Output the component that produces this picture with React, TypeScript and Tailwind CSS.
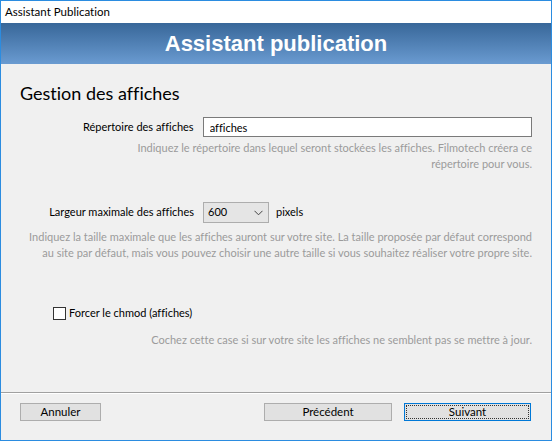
import React from "react";

const font = { fontFamily: 'Lato, "Noto Sans", sans-serif' };

const Help = ({ children }: { children: React.ReactNode }) => (
  <p className="text-right text-[11px] leading-[16px] text-[#9b9b9b] whitespace-nowrap">{children}</p>
);

const Button = ({ label, focused }: { label: string; focused?: boolean }) => (
  <button
    className={
      "w-full h-[18px] bg-[#e1e1e1] text-[11.5px] leading-none text-black flex items-center justify-center " +
      (focused ? "border border-[#0078d7] p-[1px]" : "border border-[#adadad]")
    }
  >
    {focused ? (
      <span className="w-full h-full flex items-center justify-center border border-dotted border-[#333]">{label}</span>
    ) : (
      label
    )}
  </button>
);

export default function App() {
  return (
    <div
      className="w-[552px] h-[441px] flex flex-col border border-[#2b8ce0] bg-[#f0f0f0] overflow-hidden [font-variant-ligatures:none]"
      style={font}
    >
      {/* title bar */}
      <div className="h-[22px] bg-white flex items-center pl-[4px] text-[11.5px] text-black shrink-0">
        Assistant Publication
      </div>

      {/* banner */}
      <div className="h-[41px] shrink-0 bg-gradient-to-b from-[#386799] to-[#6a9bd1] flex items-center justify-center">
        <h1
          className="text-white font-bold text-[22px] leading-none"
          style={{ fontFamily: '"Liberation Sans", Arial, sans-serif' }}
        >
          Assistant publication
        </h1>
      </div>

      {/* body */}
      <div className="flex-1 flex flex-col px-[19px]">
        <h2 className="mt-[16px] text-[18px] leading-[26px] text-black">Gestion des affiches</h2>

        <div className="mt-[11px] flex items-center">
          <label className="w-[174px] text-right text-[11px] text-black">Répertoire des affiches</label>
          <input
            defaultValue="affiches"
            className="ml-[9px] w-[330px] h-[20px] border border-[#7a7a7a] bg-white px-[6px] text-[11px] text-black outline-none [font-variant-ligatures:none]"
          />
        </div>
        <div className="mt-[3px]">
          <Help>
            Indiquez le répertoire dans lequel seront stockées les affiches. Filmotech créera ce
            <br />
            répertoire pour vous.
          </Help>
        </div>

        <div className="mt-[30px] flex items-center">
          <label className="w-[174px] text-right text-[11px] text-black">Largeur maximale des affiches</label>
          <div className="ml-[9px] w-[66px] h-[21px] border border-[#adadad] bg-[#e5e5e5] flex items-center justify-between pl-[4px] pr-[5px] text-[11px] text-black">
            <span>600</span>
            <svg width="9" height="6" viewBox="0 0 9 6" fill="none">
              <path d="M0.5 0.8 L4.5 4.8 L8.5 0.8" stroke="#444" strokeWidth="1" />
            </svg>
          </div>
          <span className="ml-[7px] text-[11px] text-black">pixels</span>
        </div>
        <div className="mt-[6px]">
          <Help>
            Indiquez la taille maximale que les affiches auront sur votre site. La taille proposée par défaut correspond
            <br />
            au site par défaut, mais vous pouvez choisir une autre taille si vous souhaitez réaliser votre propre site.
          </Help>
        </div>

        <div className="mt-[44px] ml-[33px] flex items-center">
          <span className="w-[13px] h-[13px] border border-[#333] bg-white" />
          <span className="ml-[3px] text-[11px] text-black">Forcer le chmod (affiches)</span>
        </div>
        <div className="mt-[10px]">
          <Help>Cochez cette case si sur votre site les affiches ne semblent pas se mettre à jour.</Help>
        </div>
      </div>

      {/* footer */}
      <div className="shrink-0 h-[48px] border-t border-t-[#a0a0a0] shadow-[inset_0_1px_0_#ffffff] flex items-start pt-[10px] px-[19px]">
        <div className="w-[81px]">
          <Button label="Annuler" />
        </div>
        <div className="ml-auto w-[128px]">
          <Button label="Précédent" />
        </div>
        <div className="ml-[12px] mr-[1px] w-[127px]">
          <Button label="Suivant" focused />
        </div>
      </div>
    </div>
  );
}
